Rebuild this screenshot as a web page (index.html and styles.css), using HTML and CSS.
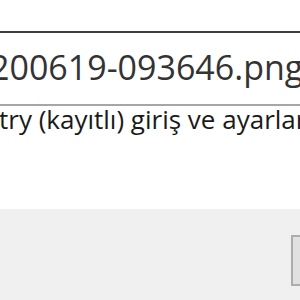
FILE: index.html
```html
<!DOCTYPE html>
<html lang="tr">
<head>
    <meta charset="UTF-8">
    <title>Registry Editor</title>
    <link rel="stylesheet" href="styles.css">
</head>
<body>
    <div class="dialog">
        <div class="header"></div>
        <div class="file-name">200619-093646.png</div>
        <div class="desc">try (kayıtlı) giriş ve ayarlar</div>
        <div class="footer">
            <button class="btn"></button>
        </div>
    </div>
</body>
</html>
```

FILE: styles.css
```css
body {
    margin: 0;
    background: #ffffff;
    font-family: "Open Sans", "Noto Sans", sans-serif;
    overflow: hidden;
}
.dialog {
    width: 300px;
    height: 300px;
    overflow: hidden;
    display: flex;
    flex-direction: column;
}
.header {
    height: 31px;
    border-bottom: 2px solid #3c3c3c;
    flex-shrink: 0;
}
.file-name {
    margin-left: -10px;
    height: 71px;
    line-height: 68px;
    font-size: 34px;
    color: #333333;
    white-space: nowrap;
    border-bottom: 2px solid #a6a6a6;
    flex-shrink: 0;
}
.desc {
    margin-left: -1px;
    height: 103px;
    line-height: 26px;
    font-size: 26px;
    color: #1a1a1a;
    white-space: nowrap;
    flex-shrink: 0;
}
.footer {
    flex: 1;
    background: #f0f0f0;
    display: flex;
    justify-content: flex-end;
    align-items: flex-start;
    padding-top: 26px;
}
.btn {
    width: 60px;
    height: 51px;
    margin-right: -51px;
    background: #e1e1e1;
    border: 2px solid #adadad;
    padding: 0;
}
```
